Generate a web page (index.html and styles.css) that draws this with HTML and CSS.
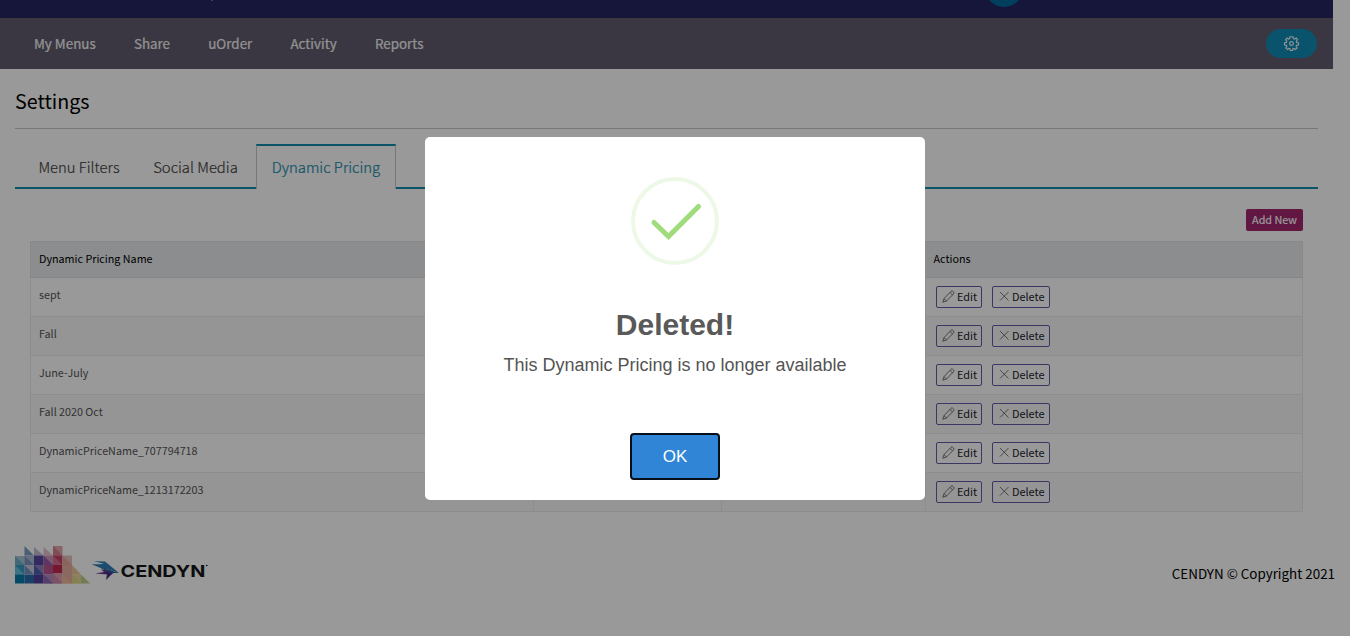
FILE: index.html
```
<!DOCTYPE html>
<html lang="en">
<head>
<meta charset="utf-8">
<title>Settings</title>
<link rel="stylesheet" href="styles.css">
</head>
<body>
<svg class="defs" width="0" height="0">
  <symbol id="pencil" viewBox="0 0 13 13"><path d="M.8 12.2 2 8.6 9 1.3Q9.8.5 10.7 1.2L11.6 2Q12.3 2.9 11.6 3.8L4.5 11ZM2 8.6 4.5 11M8 2.4 10.5 4.8"/></symbol>
  <symbol id="cross" viewBox="0 0 13 13"><path d="M2 2 10.5 10.5M10.5 2 2 10.5"/></symbol>
</svg>
<div class="page">
  <header class="topbar"><span class="speck"></span><span class="avatar"></span></header>
  <nav class="nav">
    <a>My Menus</a><a>Share</a><a>uOrder</a><a>Activity</a><a>Reports</a>
    <button class="gear" aria-label="Settings">
      <svg width="17" height="17" viewBox="-9 -9 18 18"><path d="M-1.6-7.2H1.6L2-5.2 3.3-4.7 5-5.8 6.4-3.9 5.1-2.4 5.4-1.1 7.4-.9V1.5L5.4 1.8 4.9 3.2 6 4.8 4.2 6.4 2.7 5.2 1.5 5.6 1.3 7.4H-1.3L-1.6 5.6-2.8 5.2-4.2 6.4-6 4.7-4.9 3.1-5.4 1.8-7.4 1.5V-.9L-5.4-1.2-5-2.4-6.3-4-4.7-5.8-3.2-4.7-2-5.2Z"/><circle r="2"/></svg>
    </button>
  </nav>
  <main class="content">
    <h1 class="title">Settings</h1>
    <div class="tabs"><a class="tab t1">Menu Filters</a><a class="tab t2">Social Media</a><a class="tab active">Dynamic Pricing</a></div>
    <section class="panel">
      <div class="tools"><button class="add">Add New</button></div>
      <table class="grid">
        <colgroup><col class="c1"><col class="c2"><col class="c3"><col class="c4"></colgroup>
        <thead><tr><th>Dynamic Pricing Name</th><th></th><th></th><th>Actions</th></tr></thead>
        <tbody>
          <tr><td>sept</td><td></td><td></td><td><div class="acts"><button class="btn edit"><svg><use href="#pencil"/></svg>Edit</button><button class="btn del"><svg><use href="#cross"/></svg>Delete</button></div></td></tr>
          <tr><td>Fall</td><td></td><td></td><td><div class="acts"><button class="btn edit"><svg><use href="#pencil"/></svg>Edit</button><button class="btn del"><svg><use href="#cross"/></svg>Delete</button></div></td></tr>
          <tr><td>June-July</td><td></td><td></td><td><div class="acts"><button class="btn edit"><svg><use href="#pencil"/></svg>Edit</button><button class="btn del"><svg><use href="#cross"/></svg>Delete</button></div></td></tr>
          <tr><td>Fall 2020 Oct</td><td></td><td></td><td><div class="acts"><button class="btn edit"><svg><use href="#pencil"/></svg>Edit</button><button class="btn del"><svg><use href="#cross"/></svg>Delete</button></div></td></tr>
          <tr><td>DynamicPriceName_707794718</td><td></td><td></td><td><div class="acts"><button class="btn edit"><svg><use href="#pencil"/></svg>Edit</button><button class="btn del"><svg><use href="#cross"/></svg>Delete</button></div></td></tr>
          <tr><td>DynamicPriceName_1213172203</td><td></td><td></td><td><div class="acts"><button class="btn edit"><svg><use href="#pencil"/></svg>Edit</button><button class="btn del"><svg><use href="#cross"/></svg>Delete</button></div></td></tr>
        </tbody>
      </table>
    </section>
  </main>
  <footer class="footer">
    <svg class="logo" width="195" height="40" viewBox="0 0 195 40">
      <g>
        <path fill="#a9c6d3" d="M0 11H9.500V20H0Z"/><path fill="#6fb0cc" d="M0 11 9.500 20H0Z"/><path fill="#7c9ec0" d="M9.500 1 19 10.500H9.500Z"/><path fill="#a9bbd6" d="M9.500 10.500H19V20H9.500Z"/><path fill="#7f94c2" d="M9.500 10.500 19 20H9.500Z"/>
        <path fill="#3b9cc1" d="M0 20H9.500V29.500H0Z"/><path fill="#67c0da" d="M0 20 9.500 29.500H0Z"/><path fill="#087caa" d="M0 29.500H9.500V38.500H0Z"/><path fill="#2a6bac" d="M9.500 29.500H19V38.500H9.500Z"/>
        <path fill="#c5cbe0" d="M9.500 20H19V29.500H9.500Z"/><path fill="#7394c4" d="M9.500 20 19 29.500H9.500Z"/>
        <path fill="#c3bcd6" d="M19 2 28.500 10.500H19Z"/><path fill="#55489f" d="M19 10.500H28.500V20H19Z"/><path fill="#8a80bb" d="M19 20H28.500V29.500H19Z"/><path fill="#4d5fac" d="M19 20 28.500 29.500H19Z"/><path fill="#4b3f99" d="M19 29.500H28.500V38.500H19Z"/>
        <path fill="#e6c0d0" d="M28.500 2 38 10.500H28.500Z"/><path fill="#cf97b9" d="M28.500 10.500H38V20H28.500Z"/><path fill="#9a5ca6" d="M28.500 10.500 38 20H28.500Z"/><path fill="#b85592" d="M28.500 20H38V29.500H28.500Z"/><path fill="#b48abc" d="M28.500 29.500H38V38.500H28.500Z"/><path fill="#8b67b0" d="M28.500 29.500 38 38.500H28.500Z"/>
        <path fill="#e3a7ad" d="M38 1H47.500V10.500H38Z"/><path fill="#d67f92" d="M38 1 47.500 10.500H38Z"/><path fill="#c9426a" d="M38 10.500H47.500V20H38Z"/><path fill="#d4708e" d="M38 10.500 47.500 20H38Z"/><path fill="#c2294f" d="M38 20H47.500V28.500H38Z"/><path fill="#dda0ae" d="M38 28.500H47.500V38.500H38Z"/><path fill="#cf86a8" d="M38 28.500 47.500 38.500H38Z"/>
        <path fill="#e5c3bf" d="M47.500 10.500H57V20H47.500Z"/><path fill="#e3a79b" d="M47.500 11 57 20H47.500Z"/><path fill="#e6b0a2" d="M47.500 20H57V38.500H47.500Z"/><path fill="#efb799" d="M47.500 29.500 57 38.500H47.500Z"/>
        <path fill="#e8c69a" d="M57 20 66 29.500H57Z"/><path fill="#ead5a0" d="M57 29.500H66V38.500H57Z"/><path fill="#b9cf8c" d="M66 29.500 75 38.500H66Z"/><path fill="#dcd783" d="M57 29.500 66 38.500H57Z"/>
      </g>
      <path fill="#2f80b8" d="M76.500 19.300Q84 19.500 89 18.700L79 16.300 90 16.500 104 28 95 25 87 23.500Z"/><path fill="#6a3d9a" d="M86 24.500 95 25 99 27.500 91 34 92 29.500 80 28.500 89 27Z"/><path fill="#432b83" d="M98 27.300 91 35.300 93 29.500 88 27Z"/><path fill="#2b6099" d="M85 22.500 104 28 95 28Z"/>
      <text class="brand" x="105.500" y="32" textLength="85" lengthAdjust="spacingAndGlyphs">CENDYN</text><circle cx="191.800" cy="20.500" r=".8"/>
    </svg>
    <span class="copy">CENDYN © Copyright 2021</span>
  </footer>
</div>
<div class="overlay">
  <div class="modal" role="dialog">
    <svg class="check" width="88" height="88" viewBox="0 0 88 88"><circle cx="44" cy="44" r="42"/><path d="M23 45.500 37.500 59.500 67.500 29.500"/></svg>
    <h2 class="mtitle">Deleted!</h2>
    <p class="mtext">This Dynamic Pricing is no longer available</p>
    <button class="ok">OK</button>
  </div>
</div>
</body>
</html>
```
FILE: styles.css
```
* { box-sizing: border-box; }
body { margin: 0; height: 636px; overflow: hidden; background: #fff; font-family: "Noto Sans CJK SC", "Noto Sans", sans-serif; color: #000; }
button { font-family: inherit; margin: 0; }
.defs { position: absolute; }
.topbar { width: 1333px; height: 18px; background: #262361; position: relative; overflow: hidden; }
.speck { position: absolute; left: 211px; top: 0; width: 2px; height: 1px; background: #6c6994; }
.avatar { position: absolute; left: 985px; top: -31px; width: 38px; height: 38px; border-radius: 50%; background: #00699c; }
.nav { width: 1333px; height: 51px; background: #625c6e; display: flex; align-items: center; gap: 38.200px; padding: 0 16px 0 34px; font-size: 13.4px; line-height: 20px; color: #f4f4f4; -webkit-text-stroke: .2px #f4f4f4; white-space: nowrap; }
.nav a { padding-bottom: 2px; }
.gear { margin-left: auto; width: 51px; height: 29px; border: 0; border-radius: 15px; background: #0f8bb4; display: flex; align-items: center; justify-content: center; padding: 0; }
.gear svg { fill: none; stroke: #f0f8fa; stroke-width: 1.2; }
.content { width: 1303px; margin-left: 15px; }
.title { margin: 0; height: 60px; padding-top: 17px; border-bottom: 1px solid #c6c6cb; font-size: 19.700px; line-height: 30px; font-weight: 400; }
.tabs { margin-top: 15px; height: 45px; border-bottom: 2px solid #138aaa; display: flex; font-size: 14.850px; font-weight: 300; color: #444; -webkit-text-stroke: .2px; padding-left: 8px; white-space: nowrap; }
.tab { height: 45px; padding-top: 11px; line-height: 24px; text-align: center; }
.t1 { width: 112px; }
.t2 { width: 121px; }
.active { width: 140px; background: #fff; color: #138aaa; border: 1px solid #c3c9cf; border-top: 2px solid #138aaa; border-bottom: 0; padding-top: 9px; }
.panel { padding: 20px 15px 0; }
.tools { display: flex; justify-content: flex-end; height: 32px; }
.add { width: 57px; height: 22px; border: 0; border-radius: 2px; background: #a2276f; color: #fff; font-size: 10.800px; line-height: 20px; padding: 0 0 2px; -webkit-text-stroke: .15px #fff; }
.grid { width: 1273px; table-layout: fixed; border-collapse: collapse; font-size: 10.750px; line-height: 17px; border: 1px solid #e4e5e7; }
.c1 { width: 503px; }
.c2 { width: 188px; }
.c3 { width: 204px; }
.grid th { height: 36px; padding: 0 8px 2px; text-align: left; font-weight: 400; background: #e9ecef; border-bottom: 1px solid #dee2e6; }
.grid td { height: 39px; padding: 8px 8px 0; vertical-align: top; color: #555; border: 1px solid #ececef; }
.grid tbody tr:nth-child(even) { background: #f8f8f8; }
.grid td:last-child { padding: 8px 0 0 10px; }
.acts { display: flex; gap: 10px; }
.btn { height: 22px; border: 1px solid #625ca8; border-radius: 2px; background: transparent; color: #1d1b30; font-size: 10.900px; line-height: 18px; padding: 0 0 2px 5px; display: flex; align-items: center; gap: 2px; white-space: nowrap; }
.btn svg { width: 13px; height: 13px; fill: none; stroke: #555; stroke-width: .8; }
.edit { width: 46px; }
.del { width: 58px; gap: 1px; }
.footer { width: 1335px; padding-left: 15px; margin-top: 33px; display: flex; justify-content: space-between; height: 40px; }
.brand { font: 700 16px Inter, sans-serif; fill: #17171a; }
.copy { font-size: 13.400px; line-height: 20px; padding-top: 18px; white-space: nowrap; }
.overlay { position: absolute; inset: 0; background: rgba(0,0,0,.4); display: flex; align-items: flex-start; justify-content: center; padding-top: 137px; }
.modal { width: 500px; height: 363px; background: #fff; border-radius: 5px; display: flex; flex-direction: column; align-items: center; padding-top: 40px; font-family: "Liberation Sans", sans-serif; }
.check { fill: none; stroke-width: 4; stroke: #edf8e7; }
.check path { stroke: #a0dc7c; stroke-width: 5; stroke-linecap: round; }
.mtitle { margin: 42px 0 0; font-size: 30px; line-height: 36px; color: #595959; }
.mtext { margin: 11px 0 0; font-size: 18px; line-height: 22px; color: #545454; white-space: nowrap; }
.ok { margin-top: 57px; width: 90px; height: 47px; border: 2px solid #06101a; border-radius: 4px; background: #3085d6; color: #fff; font-size: 17px; padding: 0; }
```
